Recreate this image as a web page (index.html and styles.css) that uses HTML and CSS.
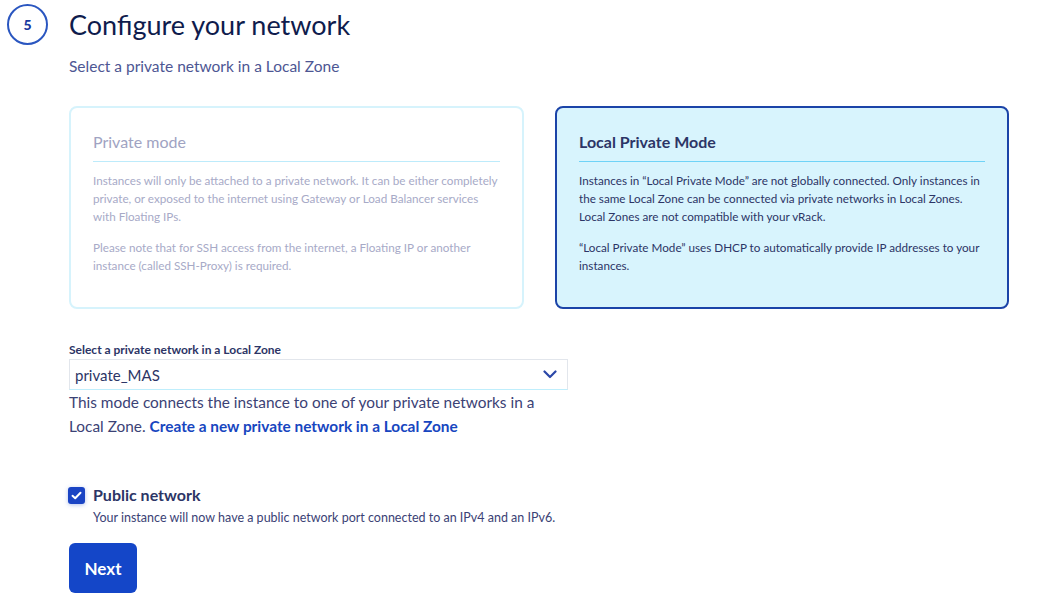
FILE: index.html
```html
<!DOCTYPE html>
<html lang="en">
<head>
<meta charset="utf-8">
<title>Configure your network</title>
<link rel="stylesheet" href="styles.css">
</head>
<body>
<div class="step">
  <div class="step-head">
    <div class="step-num">5</div>
    <h1 class="step-title">Configure your network</h1>
  </div>
  <div class="step-body">
    <p class="subtitle">Select a private network in a Local Zone</p>
    <div class="cards">
      <div class="card card-disabled">
        <h2 class="card-title">Private mode</h2>
        <div class="card-text">
          <p>Instances will only be attached to a private network. It can be either completely private, or exposed to the internet using Gateway or Load Balancer services with Floating IPs.</p>
          <p>Please note that for SSH access from the internet, a Floating IP or another instance (called SSH-Proxy) is required.</p>
        </div>
      </div>
      <div class="card card-selected">
        <h2 class="card-title">Local Private Mode</h2>
        <div class="card-text">
          <p>Instances in “Local Private Mode” are not globally connected. Only instances in the same Local Zone can be connected via private networks in Local Zones. Local Zones are not compatible with your vRack.</p>
          <p>“Local Private Mode” uses DHCP to automatically provide IP addresses to your instances.</p>
        </div>
      </div>
    </div>

    <div class="field">
      <label class="field-label">Select a private network in a Local Zone</label>
      <div class="select">
        <span class="select-value">private_MAS</span>
        <svg class="chevron" width="14" height="9" viewBox="0 0 14 9"><path d="M1.5 1.5 L7 7 L12.5 1.5" fill="none" stroke="#2b47a8" stroke-width="2.2" stroke-linecap="round" stroke-linejoin="round"/></svg>
      </div>
      <p class="help">This mode connects the instance to one of your private networks in a Local Zone. <a class="link" href="#">Create a new private network in a Local Zone</a></p>
    </div>

    <div class="check-row">
      <span class="checkbox">
        <svg width="11" height="9" viewBox="0 0 11 9"><path d="M1.5 4.8 L4.2 7.2 L9.5 1.8" fill="none" stroke="#fff" stroke-width="2" stroke-linecap="round" stroke-linejoin="round"/></svg>
      </span>
      <div class="check-text">
        <div class="check-label">Public network</div>
        <div class="check-desc">Your instance will now have a public network port connected to an IPv4 and an IPv6.</div>
      </div>
    </div>

    <button class="btn-next">Next</button>
  </div>
</div>
</body>
</html>
```
FILE: styles.css
```css
* { box-sizing: border-box; }
html, body { margin: 0; padding: 0; background: #fff; }
body {
  font-family: Lato, "Open Sans", sans-serif;
  color: #4d5693;
}
.step { padding: 4px 0 0 7px; }
.step-head {
  display: flex;
  align-items: flex-start;
  gap: 21px;
}
.step-num {
  width: 41px;
  height: 41px;
  border: 2px solid #2a56c0;
  border-radius: 50%;
  display: flex;
  align-items: center;
  justify-content: center;
  font-size: 14px;
  font-weight: 900;
  color: #1a3aa0;
  flex: none;
}
.step-title {
  margin: 3px 0 0;
  font-size: 27px;
  font-weight: 400;
  line-height: 36px;
  color: #0f1c4d;
}
.step-body { padding-left: 62px; }
.subtitle {
  margin: 11px 0 0;
  font-size: 15.5px;
  line-height: 20px;
  color: #4d5693;
}
.cards {
  display: flex;
  gap: 31px;
  margin-top: 30px;
}
.card {
  width: 455px;
  height: 203px;
  border-radius: 8px;
  padding: 23px 22px 0 22px;
}
.card-disabled {
  border: 2px solid #d6f3fc;
  background: #fff;
}
.card-selected {
  width: 454px;
  border: 2px solid #1b44a8;
  background: #d8f4fd;
}
.card-title {
  margin: 0;
  font-size: 16px;
  line-height: 22px;
  padding-bottom: 8px;
  border-bottom: 1px solid #bdebfb;
}
.card-disabled .card-title { font-weight: 400; color: #a0a3c2; }
.card-selected .card-title { font-weight: 700; color: #2c3566; border-bottom-color: #6fd3f7; }
.card-text { padding-top: 9px; }
.card-text p {
  margin: 0 0 13px;
  font-size: 11.7px;
  line-height: 18px;
}
.card-disabled .card-text p { color: #a7aac7; }
.card-selected .card-text p { color: #2c3566; }

.field { margin-top: 34px; }
.field-label {
  display: block;
  font-size: 12px;
  font-weight: 700;
  line-height: 14px;
  color: #2c3566;
}
.select {
  margin-top: 2px;
  width: 499px;
  height: 31px;
  border: 1px solid #e2e6ec;
  border-bottom-color: #bfeefc;
  display: flex;
  align-items: center;
  justify-content: space-between;
  padding: 0 10px 0 5px;
}
.select-value {
  font-size: 15px;
  color: #2c3566;
}
.chevron { display: block; }
.help {
  margin: 0;
  width: 480px;
  font-size: 15.4px;
  line-height: 24px;
  color: #3b4275;
}
.link {
  color: #1746c0;
  font-weight: 700;
  text-decoration: none;
}
.check-row {
  margin-top: 46px;
  display: flex;
  align-items: flex-start;
  gap: 8px;
  margin-left: -1px;
}
.checkbox {
  width: 17px;
  height: 17px;
  border-radius: 3px;
  background: #1a44c4;
  display: flex;
  align-items: center;
  justify-content: center;
  box-shadow: 0 1px 4px rgba(40, 80, 200, 0.35);
  margin-top: 3px;
  flex: none;
}
.checkbox svg { display: block; }
.check-label {
  font-size: 16px;
  font-weight: 700;
  line-height: 22px;
  color: #2c3566;
}
.check-desc {
  font-size: 12.5px;
  line-height: 18px;
  color: #3b4275;
  margin-top: 3px;
}
.btn-next {
  margin-top: 16px;
  width: 68px;
  height: 50px;
  border: none;
  border-radius: 6px;
  background: #1446c8;
  color: #fff;
  font-family: Lato, "Open Sans", sans-serif;
  font-size: 17px;
  font-weight: 700;
  padding: 0;
  cursor: pointer;
}
```
